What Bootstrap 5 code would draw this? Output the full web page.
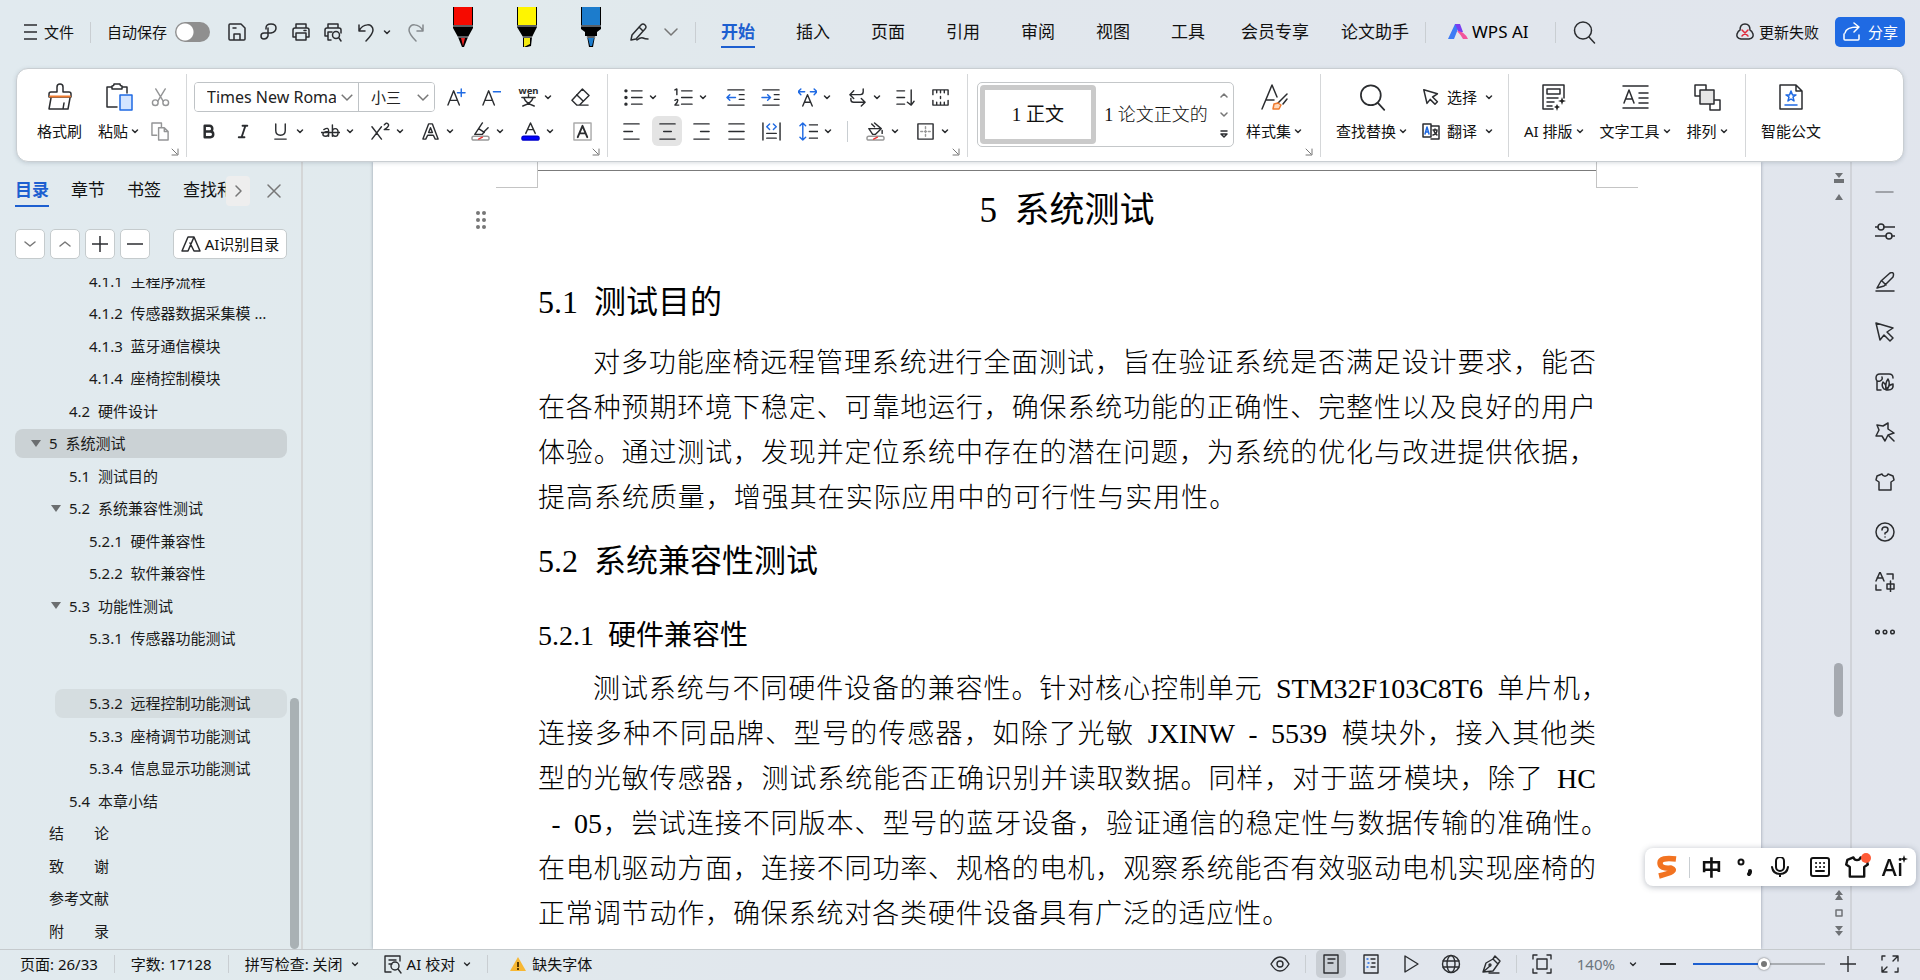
<!DOCTYPE html>
<html lang="zh-CN">
<head>
<meta charset="utf-8">
<meta name="viewport" content="width=device-width, initial-scale=1">
<title>WPS 文字</title>
<link rel="stylesheet" href="https://cdn.jsdelivr.net/npm/bootstrap@5.3.0/dist/css/bootstrap.min.css">
<style>
  :root { --ink: #2b2d30; --line: #c9ced2; --blue: #1d5fd0; }
  body {
    font: 15px/20px "Noto Sans", "Noto Sans CJK SC", sans-serif; color: #111;
    background: linear-gradient(100deg, #e1eaef 0%, #e1eaed 25%, #e1e7ed 45%, #e1e5ed 100%);
  }
  svg { fill: none; stroke: var(--ink); stroke-width: 1.5; stroke-linecap: round; stroke-linejoin: round; display: block; flex: none; }
  svg text { fill: var(--ink); stroke: none; font-weight: 700; }
  .i16 { width: 16px; height: 16px; } .i20 { width: 20px; height: 20px; } .i24 { width: 24px; height: 24px; } .i28 { width: 28px; height: 28px; }
  .dd { width: 8px; height: 8px; }
  .soft { stroke: #777; }
  .btn { --bs-btn-padding-x: 0; --bs-btn-padding-y: 0; --bs-btn-border-width: 0; --bs-btn-font-size: 15px; --bs-btn-line-height: 20px; --bs-btn-color: #111;
    display: inline-flex; align-items: center; justify-content: center; flex: none; white-space: nowrap; }
  .vline { width: 1px; height: 21px; background: var(--line); flex: none; }

  /* title bar */
  .topbar { flex: none; height: 68px; padding: 0 15px 4px 20px; }
  .topbar .qa { width: 32px; height: 32px; }
  .topbar .qa-save { margin-left: 11px; }
  .qa-undo { width: 50px; height: 32px; gap: 6px; }
  .marker { width: 64px; height: 40px; margin-bottom: 10px; }
  .marker svg { width: 20px; height: 40px; stroke: none; }
  .form-switch .form-check-input { width: 35px; height: 20px; margin: 0; border: 0; background: radial-gradient(circle at 10px 50%, #fff 8px, #8f8f8f 9px); }
  .main-tabs { gap: 41px; margin-left: 25px; padding-top: 2px; }
  .main-tabs .nav-link { padding: 0; font-size: 17px; line-height: 28px; color: #111; border-bottom: 2px solid transparent; white-space: nowrap; }
  .main-tabs .nav-link.active { color: var(--blue); border-color: var(--blue); font-weight: 700; }
  .main-tabs .long { margin: 0 -9px 0 -5px; }
  .wps-ai { font-size: 17px; margin-left: 22px; margin-right: 26px; }
  .btn.share { width: 70px; height: 30px; gap: 6px; background: #1f6ae3; color: #fff; border-radius: 5px; }

  /* ribbon */
  .ribbon { flex: none; margin: 0 16px; height: 94px; background: #fff; border: 1px solid var(--line); border-radius: 12px; box-shadow: 0 1px 4px rgba(60,80,100,.2); position: relative; z-index: 2; }
  .group { position: relative; display: flex; flex: none; border-right: 1px solid #d5d7d9; height: 83px; margin-top: 5px; padding-top: 8px; }
  .rows { display: flex; flex-direction: column; gap: 4px; }
  .rows > div { display: flex; align-items: center; height: 30px; }
  .ib { width: 35px; height: 30px; }
  .btn.ibc { width: 50px; height: 30px; justify-content: flex-start; padding-left: 10px; gap: 6px; }
  .ibc .i20, .ib .i20 { width: 19px; height: 19px; }
  .btn.pressed { background: #e4e4e4; width: 30px; margin: 0 2px 0 3px; border-radius: 6px; }
  .btn.big { flex-direction: column; justify-content: flex-start; height: 64px; gap: 4px; }
  .big .pic { height: 30px; display: flex; align-items: center; }
  .big .cap { height: 30px; display: flex; align-items: center; gap: 3px; }
  .launch { position: absolute; right: 6px; bottom: 0; width: 10px; height: 10px; stroke: #777; stroke-width: 1; }
  .combo { width: 241px; height: 30px; border: 1px solid #bfc3c6; border-radius: 4px; margin: 0 4px 0 3px; overflow: hidden; }
  .combo .form-select { border: 0; border-radius: 0; height: 28px; font-size: 16px; line-height: 20px; padding: 0 22px 0 12px; color: #222;
    background-image: url("data:image/svg+xml,%3csvg xmlns='http://www.w3.org/2000/svg' viewBox='0 0 16 16'%3e%3cpath fill='none' stroke='%23777' stroke-width='2' d='m1 5 7 7 7-7'/%3e%3c/svg%3e");
    background-size: 12px; background-position: right 5px center; }
  .combo .name-box { width: 163px; text-overflow: clip; }
  .combo .size-box { border-left: 1px solid #bfc3c6; flex: 1; font-size: 15px; }
  .gallery { width: 257px; height: 65px; border: 1px solid #c4c7c9; border-radius: 5px; font-family: "Liberation Serif", "Noto Sans CJK SC", serif; }
  .gallery .btn { height: 59px; font-size: 19px; font-family: inherit; white-space: pre; }
  .gallery .on { width: 116px; margin-left: 2px; border: 5px solid #cacaca; border-radius: 4px; }
  .gallery .off { width: 120px; font-size: 18px; font-weight: 300; }

  /* side panel */
  .side { width: 303px; flex: none; border-right: 2px solid #d4d6d7; }
  .side-tabs { height: 56px; padding: 1px 0 0 15px; margin-bottom: 11px; }
  .side-tabs .nav { gap: 22px; width: 211px; overflow: hidden; flex-wrap: nowrap; }
  .side-tabs .nav-link { padding: 0; font-size: 17px; line-height: 30px; color: #111; border-bottom: 2px solid transparent; white-space: nowrap; }
  .side-tabs .nav-link.active { color: var(--blue); border-color: var(--blue); font-weight: 700; }
  .btn.more { width: 24px; height: 30px; background: #eee; border-radius: 4px; }
  .side-acts { gap: 5px; padding: 0 14px 0 15px; }
  .side .btn.box { width: 30px; height: 30px; background: #fff; border: 1px solid #c5cbcd; border-radius: 5px; }
  .side .btn.box.wide { width: 114px; gap: 4px; }
  .toc-wrap { margin-top: 19px; overflow: hidden; }
  .toc { margin: -12px 0 4px 15px; padding: 0; list-style: none; }
  .toc a { display: flex; align-items: center; height: 29px; padding-left: 34px; border-radius: 8px; color: #1a1a1a; text-decoration: none; white-space: pre; }
  .toc .open a { padding-left: 16px; }
  .toc .open a::before { content: ""; border: 5px solid transparent; border-top: 7px solid #6b6e70; border-bottom: 0; margin-right: 8px; }
  .toc .l2 { margin-left: 20px; } .toc .l3 { margin-left: 40px; }
  .toc .sel a { background: #cbd2d5; } .toc .hov a { background: #d5dde0; }
  .thumb { width: 9px; border-radius: 5px; background: #a9b1b4; }
  .toc-wrap .thumb { height: 251px; margin: auto 2px 0 3px; }

  /* document */
  .work { padding-left: 70px; min-width: 0; }
  .sheet { background: #fff; box-shadow: 0 0 3px rgba(70,80,100,.5); position: relative; font-family: "Liberation Serif", "Noto Sans CJK SC", serif; color: #000; }
  .head-band { height: 26px; padding: 0 123px; }
  .crop { width: 42px; border-bottom: 1px solid #c4c4c4; }
  .crop.lft { border-right: 1px solid #c4c4c4; } .crop.rgt { border-left: 1px solid #c4c4c4; }
  .head-rule { flex: 1; margin-top: 8px; border-top: 1px solid #7b7b7b; }
  .handle { position: absolute; left: 102px; top: 48px; width: 12px; height: 20px; stroke: none; fill: #777; }
  .text-col { margin: 0 165px; }
  .text-col h1, .text-col h2, .text-col h3 { line-height: 45px; margin: 0; font-weight: 400; white-space: pre; }
  .text-col h1 { font-size: 35px; text-align: center; margin-bottom: 47px; }
  .text-col h2 { font-size: 32px; margin-bottom: 16px; } .text-col h3 { font-size: 28px; margin-bottom: 9px; }
  .text-col .para + h2 { margin: 18px 0 29px; }
  .para { font-size: 27px; line-height: 45px; margin: 0; font-weight: 300; }
  .para > span { display: block; text-align: justify; text-align-last: justify; white-space: nowrap; }
  .para i { font-style: normal; font-size: 28px; line-height: 1; }
  .para .first { text-indent: 55px; }
  .para .hang { margin-right: -12px; }
  .para .end-a { width: 66%; } .para .end-b { width: 71%; }
  .rail { width: 89px; flex: none; padding: 11px 6px 13px 0; }
  .rail svg { stroke: none; fill: #6f7276; }
  .rail .up { flex: 8; } .rail .down { flex: 3; }
  .rail .thumb { height: 54px; background: #a5a9b0; margin-right: 1px; }

  .tools { width: 70px; flex: none; border-left: 2px solid #d0d3d9; padding: 15px 2px 0 0; }
  .tools .btn { width: 50px; height: 50px; }
  .tools .btn.slim { height: 30px; }

  /* input-method bar */
  .ime { position: fixed; right: 4px; bottom: 94px; height: 38px; width: 271px; background: #fff; border-radius: 8px; box-shadow: 0 1px 6px rgba(50,60,80,.35); z-index: 5; padding: 0 4px 0 8px; }
  .ime .btn { width: 37px; height: 36px; }
  .ime svg { stroke: #111; stroke-width: 2; }
  .ime .zh { font-size: 21px; font-weight: 700; width: 43px; }
  .ime .narrow { width: 26px; } .ime .wide { width: 42px; }
  .ime .ai { font-size: 23px; line-height: 24px; font-weight: 500; width: 35px; }
  .ime .spark { position: absolute; right: 2px; top: 6px; }
  .ime .dot { width: 10px; height: 10px; background: #ff5a36; }

  /* status bar */
  .status { flex: none; height: 31px; border-top: 1px solid #c5cacd; padding: 0 15px 2px 20px; }
  .status .vline { height: 18px; margin: 0 16px; }
  .status .sb { width: 30px; height: 28px; }
  .status .sb.on { background: #c9ced4; border-radius: 5px; }
  .status svg { stroke-width: 1.4; }
  .status .views { gap: 10px; margin-right: 12px; }
  .status .views .vline { margin: 0; }
  .status .pct { gap: 14px; }
  .zoom-range { width: 132px; height: 14px; margin: 0 8px 0 10px; appearance: none; background: linear-gradient(90deg, #1d5fd0 54%, #a9adb2 54%) center/100% 2px no-repeat; }
  .zoom-range::-webkit-slider-thumb { appearance: none; width: 12px; height: 12px; border-radius: 50%; background: #777; border: 3px solid #fff; box-shadow: 0 0 2px #555; }
</style>
</head>
<body class="vh-100 d-flex flex-column overflow-hidden">

<svg class="d-none">
  <symbol id="dd" viewBox="0 0 8 8"><path d="M1.500 3 4 5.500 6.500 3"/></symbol>
  <symbol id="chev" viewBox="0 0 16 16"><path d="M2 5l6 6 6-6"/></symbol>
  <symbol id="la" viewBox="0 0 10 10"><path d="M2 2l5 5M8 2v6H2"/></symbol>
  <symbol id="find" viewBox="0 0 24 24"><circle cx="11" cy="10.500" r="8.500"/><path d="M17 17l5.500 6"/></symbol>
  <symbol id="arrow" viewBox="0 0 20 20"><path d="M1 1l17 5-6 4 6 6-3 3-6-6-4 5z"/></symbol>
  <symbol id="shirt" viewBox="0 0 20 20"><path d="M7 2 2 4 1 8l3 2v8h12v-8l3-2-1-4-5-2c-1 3-5 3-6 0z"/></symbol>
</svg>

<header class="topbar d-flex align-items-center">
  <button class="btn" type="button"><svg class="i20 me-1" viewBox="0 0 20 20"><path d="M4 3h13M4 10h13M4 17h13" stroke-linecap="butt"/></svg>文件</button>
  <span class="vline mx-3"></span>
  <div class="form-check form-switch d-flex align-items-center p-0 m-0 gap-2">
    <label for="autosave">自动保存</label><input class="form-check-input" type="checkbox" role="switch" id="autosave">
  </div>
  <button class="btn qa qa-save" type="button" aria-label="保存"><svg class="i20" viewBox="0 0 20 20"><path d="M2 3q0-1 1-1h11l4 4v11q0 1-1 1H3q-1 0-1-1zM7 18v-6h6v6M6 6h3"/></svg></button>
  <button class="btn qa" type="button" aria-label="输出PDF"><svg class="i20" viewBox="0 0 20 20"><path d="M7 7V6q0-4 5-4t5 4-5 5H5q-3 0-3 3t3 3 4-3V6"/></svg></button>
  <button class="btn qa" type="button" aria-label="打印"><svg class="i20" viewBox="0 0 20 20"><path d="M5 6V2h10v4M5 15H2V8q0-2 2-2h12q2 0 2 2v7h-3M5 11h10v7H5zM13 8.500h2"/></svg></button>
  <button class="btn qa" type="button" aria-label="打印预览"><svg class="i20" viewBox="0 0 20 20"><path d="M5 6V2h10v4M4 14H2V8q0-2 2-2h12q2 0 2 2v3M5 10v8h3M5 10h4"/><circle cx="13" cy="13" r="3.500"/><path d="M16 16l2 3"/></svg></button>
  <button class="btn qa-undo" type="button" aria-label="撤销"><svg class="i20" viewBox="0 0 20 20"><path d="M2 3v6h6M2 9c4-8 14-8 14-1 0 4-3 7-7 11"/></svg><svg class="dd"><use href="#dd"/></svg></button>
  <button class="btn qa opacity-50" type="button" aria-label="恢复"><svg class="i20" viewBox="0 0 20 20"><path d="M18 3v6h-6M18 9C14 1 4 1 4 8c0 4 3 7 7 11"/></svg></button>
  <button class="btn marker" type="button" aria-label="红色笔"><svg viewBox="0 0 20 40"><path d="M0 0h20v21l-5 9-4 10H9L5 30 0 21z" fill="#000"/><path d="M1 0h18v18H1z" fill="#f60a00"/><path d="M0 18.500h20v1H0zM5 29.500h10v1H5z" fill="#b8c0c8"/><path d="M8 31h4l-2 8z" fill="#e22"/></svg></button>
  <button class="btn marker" type="button" aria-label="黄色笔"><svg viewBox="0 0 20 40"><path d="M0 0h20v20l-5 10-1 9-8 2V30L0 20z" fill="#000"/><path d="M1 0h18v18H1z" fill="#fff500"/><path d="M0 18.500h20v1H0zM5 29.500h10v1H5z" fill="#b8c0c8"/><path d="M7 31h6v6l-6 3z" fill="#f3ea10"/></svg></button>
  <button class="btn marker" type="button" aria-label="蓝色笔"><svg viewBox="0 0 20 40"><path d="M0 0h20v22l-4 3v4h-2l-2 11H8L6 29H4v-4l-4-3z" fill="#000"/><path d="M1 0h18v18H1z" fill="#1c7ccc"/><path d="M0 18.500h20v1H0zM5 29.500h10v1H5z" fill="#b8c0c8"/><path d="M7 31h6l-2 8H9z" fill="#1c7ccc"/></svg></button>
  <button class="btn qa" type="button" aria-label="画笔"><svg class="i20" viewBox="0 0 20 20"><path d="M3 13 12 3q2-2 4 0t0 4L7 17l-5 1zM10 5l4 4M8 18q4-3 6-2t5 1"/></svg></button>
  <button class="btn qa" type="button" aria-label="更多"><svg class="i16 soft"><use href="#chev"/></svg></button>
  <span class="vline ms-2"></span>
  <nav class="nav main-tabs flex-nowrap">
    <a class="nav-link active" href="#">开始</a><a class="nav-link" href="#">插入</a><a class="nav-link" href="#">页面</a><a class="nav-link" href="#">引用</a><a class="nav-link" href="#">审阅</a><a class="nav-link" href="#">视图</a><a class="nav-link" href="#">工具</a><a class="nav-link long" href="#">会员专享</a><a class="nav-link" href="#">论文助手</a>
  </nav>
  <span class="vline ms-3"></span>
  <a class="wps-ai d-flex align-items-center gap-1 text-decoration-none text-black text-nowrap" href="#"><svg class="i20" viewBox="0 0 20 20" style="stroke:none"><path d="M7 2h5L6 17H0z" fill="#3d7bf5"/><path d="M7 2h5l3 8-4 1z" fill="#7a3df0"/><path d="M9 9q7 0 11 8h-5q-2-4-6-8z" fill="#f2549b"/></svg>WPS AI</a>
  <span class="vline me-3"></span>
  <button class="btn" type="button" aria-label="搜索"><svg class="i24"><use href="#find"/></svg></button>
  <button class="btn ms-auto me-3" type="button"><svg class="i20 me-1" viewBox="0 0 20 20"><path d="M6 17q-5-1-4-5 1-3 3-4 0-6 5-6t5 6q2 1 3 4 1 4-4 5z"/><path d="M7 8l6 6M13 8l-6 6" stroke="#e02b3c"/></svg>更新失败</button>
  <button class="btn share" type="button"><svg class="i20" viewBox="0 0 20 20" style="stroke:#fff"><path d="M2 12v5q0 1 1 1h13q1 0 1-1v-4M3 11q1-6 13-6M12 1l5 4-5 5"/></svg>分享</button>
</header>

<section class="ribbon d-flex">
  <div class="group" style="width:170px">
    <button class="btn big ms-3 ps-1" type="button"><span class="pic"><svg class="i28" viewBox="0 0 28 28"><path d="M11 9V4q0-3 3-3t3 3v5h6q2 0 2 2v3H3v-3q0-2 2-2zM5 15 3 26h19l2-11M18 20l-1 6"/><path d="M4 13.500h20" stroke="#f07b2e" stroke-width="2"/></svg></span><span class="cap">格式刷</span></button>
    <button class="btn big ms-3" type="button"><span class="pic"><svg class="i28" viewBox="0 0 28 28"><path d="M12 24H2V4h5M17 4h5v6M7 6V3q2 0 2-2h6q0 2 2 2v3z"/><path d="M15 12h12v15H15z" fill="#d3e4ff" stroke="#1f6ae3"/></svg></span><span class="cap">粘贴<svg class="dd"><use href="#dd"/></svg></span></button>
    <div class="rows ms-1 opacity-50"><div><button class="btn ib" type="button" aria-label="剪切"><svg class="i20" viewBox="0 0 20 20"><path d="M5 1l8 13M15 1 7 14"/><circle cx="4.500" cy="15.500" r="3"/><circle cx="15.500" cy="15.500" r="3"/></svg></button></div><div><button class="btn ib" type="button" aria-label="复制"><svg class="i20" viewBox="0 0 20 20"><path d="M6 14H1V1h10v4M8 6h6l4 4v9H8zM14 6v4h4"/></svg></button></div></div>
    <svg class="launch"><use href="#la"/></svg>
  </div>

  <div class="group ps-1" style="width:421px">
    <div class="rows">
      <div>
        <div class="combo d-flex"><select class="form-select name-box" aria-label="字体"><option>Times New Roman</option></select><select class="form-select size-box" aria-label="字号"><option>小三</option></select></div>
        <button class="btn ib" type="button" aria-label="增大字号"><svg class="i20" viewBox="0 0 20 20"><path d="M1 18 7 3l6 15M3 13h8"/><path d="M15 1v8M11 5h8" stroke="#1f6ae3"/></svg></button>
        <button class="btn ib" type="button" aria-label="减小字号"><svg class="i20" viewBox="0 0 20 20"><path d="M1 18 7 3l6 15M3 13h8"/><path d="M12 4h8" stroke="#1f6ae3"/></svg></button>
        <button class="btn ibc" type="button" aria-label="拼音指南"><svg class="i20" viewBox="0 0 20 20" style="overflow:visible"><text x="10" y="6" font-size="10" text-anchor="middle">wen</text><path d="M3 10h14M10 7v3M5 10q2 6 11 9M15 10q-2 6-11 9"/></svg><svg class="dd"><use href="#dd"/></svg></button>
        <button class="btn ib ms-1" type="button" aria-label="清除格式"><svg class="i20" viewBox="0 0 20 20"><path d="M12 1l7 7-10 10H6l-5-5zM6 7l7 7M9 18h9"/></svg></button>
      </div>
      <div>
        <button class="btn ib" type="button" aria-label="加粗"><svg class="i20" viewBox="0 0 20 20" style="stroke-width:2.600"><path d="M6 4h5q3 0 3 3t-3 3H6zM6 10h6q3 0 3 3t-3 3H6z"/></svg></button>
        <button class="btn ib" type="button" aria-label="倾斜"><svg class="i20" viewBox="0 0 20 20" style="stroke-width:2"><path d="M9 4h5M5 16h6M12 4 8 16"/></svg></button>
        <button class="btn ibc" type="button" aria-label="下划线"><svg class="i20" viewBox="0 0 20 20"><path d="M5 2v7q0 5 5 5t5-5V2M4 18h12"/></svg><svg class="dd"><use href="#dd"/></svg></button>
        <button class="btn ibc" type="button" aria-label="删除线"><svg class="i20" viewBox="0 0 20 20"><path d="M3 8q5-3 5 1v6M8 10q-6 0-6 3 0 2 3 2t3-3M12 3v12M12 10q0-3 3-3t3 4-3 4-3-3M0 11h20"/></svg><svg class="dd"><use href="#dd"/></svg></button>
        <button class="btn ibc" type="button" aria-label="上标"><svg class="i20" viewBox="0 0 20 20"><path d="M1 5l10 13M11 5 1 18M14 3q2-3 4-1t-4 6h5"/></svg><svg class="dd"><use href="#dd"/></svg></button>
        <button class="btn ibc" type="button" aria-label="文字效果"><svg class="i20" viewBox="0 0 20 20"><path d="M2 18 8 2h4l6 16h-3l-2-4H7l-2 4zM10 6l-2 5h4z"/></svg><svg class="dd"><use href="#dd"/></svg></button>
        <button class="btn ibc" type="button" aria-label="突出显示"><svg class="i20" viewBox="0 0 20 20"><path d="M12 1 8 7l-4 6h8l2-3 4-4M8 7l6 4"/><rect x="1" y="15" width="18" height="4" rx="2" stroke="#999"/><path d="M8 18l4-2" stroke="#e33"/></svg><svg class="dd"><use href="#dd"/></svg></button>
        <button class="btn ibc" type="button" aria-label="字体颜色"><svg class="i20" viewBox="0 0 20 20"><path d="M5 12 10 1l5 11M7 8h6"/><rect x="1" y="15" width="18" height="4" rx="2" fill="#00f" stroke="#00c"/></svg><svg class="dd"><use href="#dd"/></svg></button>
        <button class="btn ib ms-1" type="button" aria-label="字符底纹"><svg class="i20" viewBox="0 0 20 20"><path d="M1 1h18v18H1z" stroke="#aaa"/><path d="M5 16l5-12 5 12M7 12h6" stroke-width="2"/></svg></button>
      </div>
    </div>
    <svg class="launch"><use href="#la"/></svg>
  </div>

  <div class="group" style="width:360px;padding-left:6px">
    <div class="rows">
      <div>
        <button class="btn ibc" type="button" aria-label="项目符号"><svg class="i20" viewBox="0 0 20 20"><path d="M8 3h11M8 10h11M8 17h11"/><path d="M2 3h.1M2 10h.1M2 17h.1" stroke-width="3.500"/></svg><svg class="dd"><use href="#dd"/></svg></button>
        <button class="btn ibc" type="button" aria-label="编号"><svg class="i20" viewBox="0 0 20 20"><path d="M8 3h11M8 10h11M8 17h11M1 2l2-1v6M1 13q3-2 3 0t-3 5h4"/></svg><svg class="dd"><use href="#dd"/></svg></button>
        <button class="btn ib ms-1" type="button" aria-label="减少缩进"><svg class="i20" viewBox="0 0 20 20"><path d="M2 2h17M14 7h5M14 12h5M2 18h17"/><path d="M1 10h9M4 7l-3 3 3 3" stroke="#1f6ae3"/></svg></button>
        <button class="btn ib" type="button" aria-label="增加缩进"><svg class="i20" viewBox="0 0 20 20"><path d="M2 2h17M14 7h5M14 12h5M2 18h17"/><path d="M1 10h9M7 7l3 3-3 3" stroke="#1f6ae3"/></svg></button>
        <button class="btn ibc" type="button" aria-label="字符缩放"><svg class="i20" viewBox="0 0 20 20"><path d="M5 19l5-12 5 12M7 15h6"/><path d="M1 4h6M13 4h6M3 1 0 4l3 3M17 1l3 3-3 3" stroke="#1f6ae3"/></svg><svg class="dd"><use href="#dd"/></svg></button>
        <button class="btn ibc" type="button" aria-label="换行"><svg class="i20" viewBox="0 0 20 20"><path d="M16 1v3q0 3-3 3H2M6 3 2 7l4 4M3 11v1q0 3 3 3h12M14 11l4 4-4 4"/></svg><svg class="dd"><use href="#dd"/></svg></button>
        <button class="btn ib" type="button" aria-label="排序"><svg class="i20" viewBox="0 0 20 20"><path d="M1 3h8M1 10h8M1 17h8M16 2v16M12 15l4 3 3-4"/></svg></button>
        <button class="btn ib" type="button" aria-label="制表位"><svg class="i20" viewBox="0 0 20 20"><path d="M2 7V2h16v5M6 2v3M10 2v3M14 2v3M2 13v5h16v-5M6 18v-3M10 18v-3M14 18v-3M10 9v2"/></svg></button>
      </div>
      <div>
        <button class="btn ib" type="button" aria-label="左对齐"><svg class="i20" viewBox="0 0 20 20"><path d="M2 2h16M2 10h9M2 18h16"/></svg></button>
        <button class="btn ib pressed" type="button" aria-label="居中"><svg class="i20" viewBox="0 0 20 20"><path d="M2 2h16M6 10h8M2 18h16"/></svg></button>
        <button class="btn ib" type="button" aria-label="右对齐"><svg class="i20" viewBox="0 0 20 20"><path d="M2 2h16M9 10h9M2 18h16"/></svg></button>
        <button class="btn ib" type="button" aria-label="两端对齐"><svg class="i20" viewBox="0 0 20 20"><path d="M2 2h16M2 10h16M2 18h16"/></svg></button>
        <button class="btn ib" type="button" aria-label="分散对齐"><svg class="i20" viewBox="0 0 20 20"><path d="M1 1v18M19 1v18M5 12h10M5 17h10"/><path d="M8 2 5 5l3 3M12 2l3 3-3 3" stroke="#1f6ae3"/></svg></button>
        <button class="btn ibc" type="button" aria-label="行距"><svg class="i20" viewBox="0 0 20 20"><path d="M11 3h9M11 10h9M11 17h9"/><path d="M4 1v18M1 4l3-3 3 3M1 16l3 3 3-3" stroke="#1f6ae3"/></svg><svg class="dd"><use href="#dd"/></svg></button>
        <span class="vline ms-2 me-2"></span>
        <button class="btn ibc" type="button" aria-label="底纹"><svg class="i20" viewBox="0 0 20 20"><path d="M9 1l7 6-6 6H7L3 7h12M17 9v3M6 2l3 3"/><rect x="1" y="15" width="18" height="4" rx="2" stroke="#999"/><path d="M8 18l4-2" stroke="#e33"/></svg><svg class="dd"><use href="#dd"/></svg></button>
        <button class="btn ibc" type="button" aria-label="边框"><svg class="i20" viewBox="0 0 20 20"><path d="M2 2h16v16H2z"/><path d="M10 5v10M5 10h10" stroke="#999" stroke-dasharray="2 2"/></svg><svg class="dd"><use href="#dd"/></svg></button>
      </div>
    </div>
    <svg class="launch"><use href="#la"/></svg>
  </div>

  <div class="group" style="width:353px;padding-left:9px">
    <div class="gallery d-flex align-items-center">
      <button class="btn on" type="button">1 正文</button>
      <button class="btn off" type="button">1 论文正文的</button>
      <div class="d-flex flex-column justify-content-between h-100 py-2 ms-1"><svg class="dd soft"><path d="M1 6l3-3 3 3"/></svg><svg class="dd soft"><path d="M1 2l3 3 3-3"/></svg><svg class="dd"><path d="M1 1h6M1 4h6L4 7z"/></svg></div>
    </div>
    <button class="btn big ms-2 ps-1" type="button"><span class="pic"><svg class="i28" viewBox="0 0 28 28"><path d="M2 26 12 2l5 12M6 17h8M27 11l-9 9M27 16l-4 5"/><path d="M14 21l4-1 3 2-2 4h-6z" fill="#ffd9bd" stroke="#f07b2e"/></svg></span><span class="cap">样式集<svg class="dd"><use href="#dd"/></svg></span></button>
    <svg class="launch"><use href="#la"/></svg>
  </div>

  <div class="group" style="width:188px;padding-left:15px">
    <button class="btn big" type="button"><span class="pic"><svg class="i28" viewBox="0 0 24 24"><use href="#find"/></svg></span><span class="cap">查找替换<svg class="dd"><use href="#dd"/></svg></span></button>
    <div class="rows ms-3">
      <div><button class="btn gap-2" type="button"><svg class="i16" viewBox="0 0 20 20" style="stroke-width:1.900"><use href="#arrow"/></svg>选择<svg class="dd"><use href="#dd"/></svg></button></div>
      <div><button class="btn gap-2" type="button"><svg class="i16" viewBox="0 0 16 16" style="overflow:visible"><path d="M8 1H0v13h8zM8 3h8v13H8M10 7h4M12 6v1M10 12q4-1 4-5M11 8q1 3 3 4"/><path d="M2 11 4 4l2 7M3 9h2" stroke="#1f6ae3"/></svg>翻译<svg class="dd"><use href="#dd"/></svg></button></div>
    </div>
  </div>

  <div class="group gap-3" style="width:237px;padding-left:15px">
    <button class="btn big" type="button"><span class="pic"><svg class="i28" viewBox="0 0 28 28"><path d="M13 26H3V2h21v13M7 6h13v5H7zM7 15h11M7 19h7M7 23h5"/><path d="M22 14l1 3 3 1-3 1-1 3-1-3-3-1 3-1zM17 21l1 2 2 1-2 1-1 3-1-3-2-1 2-1z" fill="#222" stroke="none"/></svg></span><span class="cap">AI 排版<svg class="dd"><use href="#dd"/></svg></span></button>
    <button class="btn big" type="button"><span class="pic"><svg class="i28" viewBox="0 0 28 28"><path d="M2 3h25M18 10h9M18 15h9M18 20h9M2 25h25M3 20 8 7l5 13M5 16h6"/></svg></span><span class="cap">文字工具<svg class="dd"><use href="#dd"/></svg></span></button>
    <button class="btn big" type="button"><span class="pic"><svg class="i28" viewBox="0 0 28 28"><path d="M2 2h11v11H2zM17 17h10v10H17z"/><path d="M7 7h14v14H7z" fill="#e6e6e6"/></svg></span><span class="cap">排列<svg class="dd"><use href="#dd"/></svg></span></button>
  </div>
  <div class="group border-0" style="padding-left:15px">
    <button class="btn big" type="button"><span class="pic"><svg class="i28" viewBox="0 0 28 28"><path d="M3 2h16l6 6v18H3zM19 2v6h6"/><path d="M14 8l1.500 4H19l-3 2 1 4-3-2-3 2 1-4-3-2h3.500zM8 22h12" stroke="#1f6ae3"/></svg></span><span class="cap">智能公文</span></button>
  </div>
</section>

<main class="d-flex overflow-hidden" style="flex:1 1 0">
  <aside class="side d-flex flex-column">
    <div class="side-tabs d-flex align-items-center">
      <nav class="nav"><a class="nav-link active" href="#">目录</a><a class="nav-link" href="#">章节</a><a class="nav-link" href="#">书签</a><a class="nav-link" href="#">查找和替换</a></nav>
      <button class="btn more" type="button" aria-label="更多标签"><svg class="i16 soft" viewBox="0 0 16 16"><path d="M6 3l5 5-5 5"/></svg></button>
      <button class="btn ms-3" type="button" aria-label="关闭"><svg class="i16 soft" viewBox="0 0 16 16"><path d="M2 2l12 12M14 2 2 14"/></svg></button>
    </div>
    <div class="side-acts d-flex">
      <button class="btn box" type="button" aria-label="展开"><svg class="i16 soft" viewBox="0 0 16 16"><path d="M3 6l5 4 5-4"/></svg></button>
      <button class="btn box" type="button" aria-label="收起"><svg class="i16 soft" viewBox="0 0 16 16"><path d="M3 10l5-4 5 4"/></svg></button>
      <button class="btn box" type="button" aria-label="增加"><svg class="i16" viewBox="0 0 16 16"><path d="M8 0v16M0 8h16"/></svg></button>
      <button class="btn box" type="button" aria-label="减少"><svg class="i16" viewBox="0 0 16 16"><path d="M0 8h16"/></svg></button>
      <button class="btn box wide ms-auto" type="button"><svg class="i20" viewBox="0 0 20 20"><path d="M1 17 7 3h6l-6 14zM9 9l4 8h6L13 3"/></svg>AI识别目录</button>
    </div>
    <div class="toc-wrap d-flex flex-grow-1">
      <ul class="toc d-flex flex-column justify-content-between flex-grow-1">
        <li class="l3"><a href="#">4.1.1  主程序流程</a></li>
        <li class="l3"><a href="#">4.1.2  传感器数据采集模 …</a></li>
        <li class="l3"><a href="#">4.1.3  蓝牙通信模块</a></li>
        <li class="l3"><a href="#">4.1.4  座椅控制模块</a></li>
        <li class="l2"><a href="#">4.2  硬件设计</a></li>
        <li class="open sel"><a href="#">5  系统测试</a></li>
        <li class="l2"><a href="#">5.1  测试目的</a></li>
        <li class="l2 open"><a href="#">5.2  系统兼容性测试</a></li>
        <li class="l3"><a href="#">5.2.1  硬件兼容性</a></li>
        <li class="l3"><a href="#">5.2.2  软件兼容性</a></li>
        <li class="l2 open"><a href="#">5.3  功能性测试</a></li>
        <li class="l3"><a href="#">5.3.1  传感器功能测试</a></li>
        <li class="l3"><a href="#" aria-label="空标题"></a></li>
        <li class="l3 hov"><a href="#">5.3.2  远程控制功能测试</a></li>
        <li class="l3"><a href="#">5.3.3  座椅调节功能测试</a></li>
        <li class="l3"><a href="#">5.3.4  信息显示功能测试</a></li>
        <li class="l2"><a href="#">5.4  本章小结</a></li>
        <li><a href="#">结　　论</a></li>
        <li><a href="#">致　　谢</a></li>
        <li><a href="#">参考文献</a></li>
        <li><a href="#">附　　录</a></li>
      </ul>
      <div class="thumb"></div>
    </div>
  </aside>

  <div class="work d-flex flex-grow-1">
    <article class="sheet flex-grow-1">
      <div class="head-band d-flex"><div class="crop lft"></div><div class="head-rule"></div><div class="crop rgt"></div></div>
      <svg class="handle" viewBox="0 0 12 20"><circle cx="3" cy="3" r="2"/><circle cx="9" cy="3" r="2"/><circle cx="3" cy="10" r="2"/><circle cx="9" cy="10" r="2"/><circle cx="3" cy="17" r="2"/><circle cx="9" cy="17" r="2"/></svg>
      <div class="text-col">
        <h1>5  系统测试</h1>
        <h2>5.1  测试目的</h2>
        <p class="para"><span class="first">对多功能座椅远程管理系统进行全面测试，旨在验证系统是否满足设计要求，能否</span><span>在各种预期环境下稳定、可靠地运行，确保系统功能的正确性、完整性以及良好的用户</span><span>体验。通过测试，发现并定位系统中存在的潜在问题，为系统的优化与改进提供依据，</span><span class="end-a">提高系统质量，增强其在实际应用中的可行性与实用性。</span></p>
        <h2>5.2  系统兼容性测试</h2>
        <h3>5.2.1  硬件兼容性</h3>
        <p class="para"><span class="first hang">测试系统与不同硬件设备的兼容性。针对核心控制单元&ensp;<i>STM32F103C8T6</i>&ensp;单片机，</span><span>连接多种不同品牌、型号的传感器，如除了光敏&ensp;<i>JXINW</i>&ensp;-&ensp;<i>5539</i>&ensp;模块外，接入其他类</span><span>型的光敏传感器，测试系统能否正确识别并读取数据。同样，对于蓝牙模块，除了&ensp;<i>HC</i></span><span class="hang">&ensp;-&ensp;<i>05</i>，尝试连接不同版本、型号的蓝牙设备，验证通信的稳定性与数据传输的准确性。</span><span>在电机驱动方面，连接不同功率、规格的电机，观察系统能否有效驱动电机实现座椅的</span><span class="end-b">正常调节动作，确保系统对各类硬件设备具有广泛的适应性。</span></p>
      </div>
    </article>
    <div class="rail d-flex flex-column align-items-end">
      <svg width="10" height="10" viewBox="0 0 10 10"><path d="M1 0h8L5 5zM0 6h10v4H0z"/></svg>
      <svg class="mt-2" width="10" height="10" viewBox="0 0 10 10"><path d="M5 3l4 6H1z"/></svg>
      <div class="up"></div><div class="thumb"></div><div class="down"></div>
      <svg width="10" height="10" viewBox="0 0 10 10"><path d="M5 0l4 5H1zM5 4l4 6H1z"/></svg>
      <svg class="my-2" width="10" height="10" viewBox="0 0 10 10"><path d="M2 2h6v6H2z" fill="none" stroke="#6f7276"/></svg>
      <svg width="10" height="10" viewBox="0 0 10 10"><path d="M1 0h8L5 5zM1 5h8l-4 5z"/></svg>
    </div>
  </div>

  <aside class="tools d-flex flex-column align-items-center">
    <button class="btn slim" type="button" aria-label="折叠"><svg class="i20" viewBox="0 0 20 20" style="stroke:#8a8d92"><path d="M1 10h17"/></svg></button>
    <button class="btn" type="button" aria-label="设置"><svg class="i20" viewBox="0 0 20 20"><path d="M0 5h3M9 5h11M0 14h11M17 14h3"/><circle cx="6" cy="5" r="3"/><circle cx="14" cy="14" r="3"/></svg></button>
    <button class="btn" type="button" aria-label="编辑"><svg class="i20" viewBox="0 0 20 20"><path d="M1 19h18M2 16l4-7 9-8q2-1 3 0t0 4l-9 9zM7 9l4 4"/></svg></button>
    <button class="btn" type="button" aria-label="选择工具"><svg class="i20"><use href="#arrow"/></svg></button>
    <button class="btn" type="button" aria-label="素材"><svg class="i20" viewBox="0 0 20 20"><path d="M18 6q0-4-4-4H5Q1 2 1 6t4 3q3-1 2-4M2 9v9h4M9 17q-3-3-1-7 4 3 3 8-1-7 2-11 3 5-1 11 1-5 6-6 1 6-5 6z"/></svg></button>
    <button class="btn" type="button" aria-label="收藏"><svg class="i20" viewBox="0 0 20 20"><path d="M2 3l6 1 5-3v6l6 4-6 2-3 6-3-5H1l3-6zM14 14l5 5"/></svg></button>
    <button class="btn" type="button" aria-label="皮肤"><svg class="i20"><use href="#shirt"/></svg></button>
    <button class="btn" type="button" aria-label="帮助"><svg class="i20" viewBox="0 0 20 20"><circle cx="10" cy="10" r="9"/><path d="M7 8q0-3 3-3t3 2.500-3 3.500v1M10 15h.1"/></svg></button>
    <button class="btn" type="button" aria-label="翻译"><svg class="i20" viewBox="0 0 20 20"><path d="M1 9l4-9 4 9M2 6h6M12 2h6v5M1 13v5h5M12 12h7v5h-7zM15.500 9v11"/></svg></button>
    <button class="btn" type="button" aria-label="更多"><svg class="i20" viewBox="0 0 20 20"><circle cx="2.500" cy="10" r="1.800"/><circle cx="10" cy="10" r="1.800"/><circle cx="17.500" cy="10" r="1.800"/></svg></button>
  </aside>
</main>

<footer class="status d-flex align-items-center">
  <span>页面: 26/33</span><span class="vline"></span>
  <span>字数: 17128</span><span class="vline"></span>
  <button class="btn gap-2" type="button">拼写检查: 关闭<svg class="dd"><use href="#dd"/></svg></button>
  <button class="btn ms-4 gap-1" type="button"><svg class="i20" viewBox="0 0 20 20"><path d="M8 18H2V2h15v5M6 6h7M6 10h3"/><circle cx="12" cy="12" r="4"/><path d="M15 15l3 4"/></svg>AI 校对<svg class="dd ms-1"><use href="#dd"/></svg></button>
  <span class="vline"></span>
  <button class="btn gap-1 ms-1" type="button"><svg class="i20" viewBox="0 0 20 20" style="stroke:none"><path d="M10 3l8 14H2z" fill="#f7b733"/><path d="M9 8h2v5H9zM9 14h2v2H9z" fill="#5a3a00"/></svg>缺失字体</button>

  <div class="views d-flex align-items-center ms-auto">
    <button class="btn sb" type="button" aria-label="护眼模式"><svg class="i20" viewBox="0 0 20 20"><path d="M1 10q4-7 9-7t9 7q-4 7-9 7t-9-7z"/><circle cx="10" cy="10" r="3"/></svg></button>
    <span class="vline"></span>
    <button class="btn sb on" type="button" aria-label="页面视图"><svg class="i20" viewBox="0 0 20 20"><path d="M3 1h14v18H3zM7 5h7M7 9h5"/></svg></button>
    <button class="btn sb" type="button" aria-label="大纲视图"><svg class="i20" viewBox="0 0 20 20"><path d="M3 1h14v18H3zM10 5h4M11 9h3M10 13h4"/><path d="M6 5h1M7 9h1M6 13h1" stroke="#1f6ae3"/></svg></button>
    <button class="btn sb" type="button" aria-label="阅读视图"><svg class="i20" viewBox="0 0 20 20"><path d="M4 2l13 8-13 8z"/></svg></button>
    <button class="btn sb" type="button" aria-label="Web 版式"><svg class="i20" viewBox="0 0 20 20"><circle cx="10" cy="10" r="8.500"/><ellipse cx="10" cy="10" rx="4" ry="8.500"/><path d="M2 7h16M2 13h16"/></svg></button>
    <button class="btn sb" type="button" aria-label="写作模式"><svg class="i20" viewBox="0 0 20 20"><path d="M2 18 5 9l7-4 5 5-5 7zM12 5l2-3 5 5-2 3M2 18l7-6M8 19h10"/><circle cx="9" cy="11" r="1"/></svg></button>
    <span class="vline"></span>
    <button class="btn sb" type="button" aria-label="适合页面"><svg class="i20" viewBox="0 0 20 20"><path d="M1 5V1h4M15 1h4v4M19 15v4h-4M5 19H1v-4M5 5h10v10H5z"/></svg></button>
  </div>
  <button class="btn pct ms-2 text-secondary" type="button">140%<svg class="dd"><use href="#dd"/></svg></button>
  <button class="btn sb ms-3" type="button" aria-label="缩小"><svg class="i16" viewBox="0 0 16 16"><path d="M0 8h16" stroke-width="2"/></svg></button>
  <input class="zoom-range" type="range" min="0" max="100" value="54" aria-label="缩放">
  <button class="btn sb me-2" type="button" aria-label="放大"><svg class="i16" viewBox="0 0 16 16"><path d="M0 8h16M8 0v16"/></svg></button>
  <button class="btn sb ms-1" type="button" aria-label="全屏"><svg class="i20" viewBox="0 0 20 20"><path d="M2 6V2h3M13 2h5v5M18 14v4h-3M2 13v5h5M18 2l-5 5M2 18l5-5"/></svg></button>
</footer>

<div class="ime d-flex align-items-center">
  <svg class="i28" viewBox="0 0 28 28"><path d="M23 6Q7 4 7 10t11 5q8 3-12 8" style="stroke:#f27321;stroke-width:5.500;stroke-linecap:butt"/></svg>
  <span class="vline ms-2"></span>
  <button class="btn zh" type="button">中</button>
  <button class="btn narrow" type="button" aria-label="标点"><svg class="i20" viewBox="0 0 20 20"><circle cx="5" cy="5" r="2.500"/><path d="M14 14v1q0 1-1 2" stroke-width="4"/></svg></button>
  <button class="btn wide" type="button" aria-label="语音"><svg class="i20" viewBox="0 0 20 20"><rect x="6" y="0" width="8" height="14" rx="4"/><path d="M2 10q1 7 8 7t8-7M10 17v3"/></svg></button>
  <button class="btn" type="button" aria-label="键盘"><svg class="i20" viewBox="0 0 20 20"><rect x="1" y="1" width="18" height="18" rx="2"/><path d="M6 6h.1M10 6h.1M14 6h.1M6 10h.1M10 10h.1M14 10h.1M6 14h8"/></svg></button>
  <button class="btn position-relative" type="button" aria-label="皮肤"><svg class="i24" viewBox="0 0 20 20"><use href="#shirt"/></svg><span class="dot position-absolute top-0 end-0 rounded-circle me-1 mt-1"></span></button>
  <button class="btn ai position-relative" type="button">Ai<svg class="spark" width="8" height="8" viewBox="0 0 8 8"><path d="M4 0l1 3 3 1-3 1-1 3-1-3-3-1 3-1z" fill="#111" stroke="none"/></svg></button>
</div>

<script src="https://cdn.jsdelivr.net/npm/bootstrap@5.3.0/dist/js/bootstrap.bundle.min.js"></script>
</body>
</html>
